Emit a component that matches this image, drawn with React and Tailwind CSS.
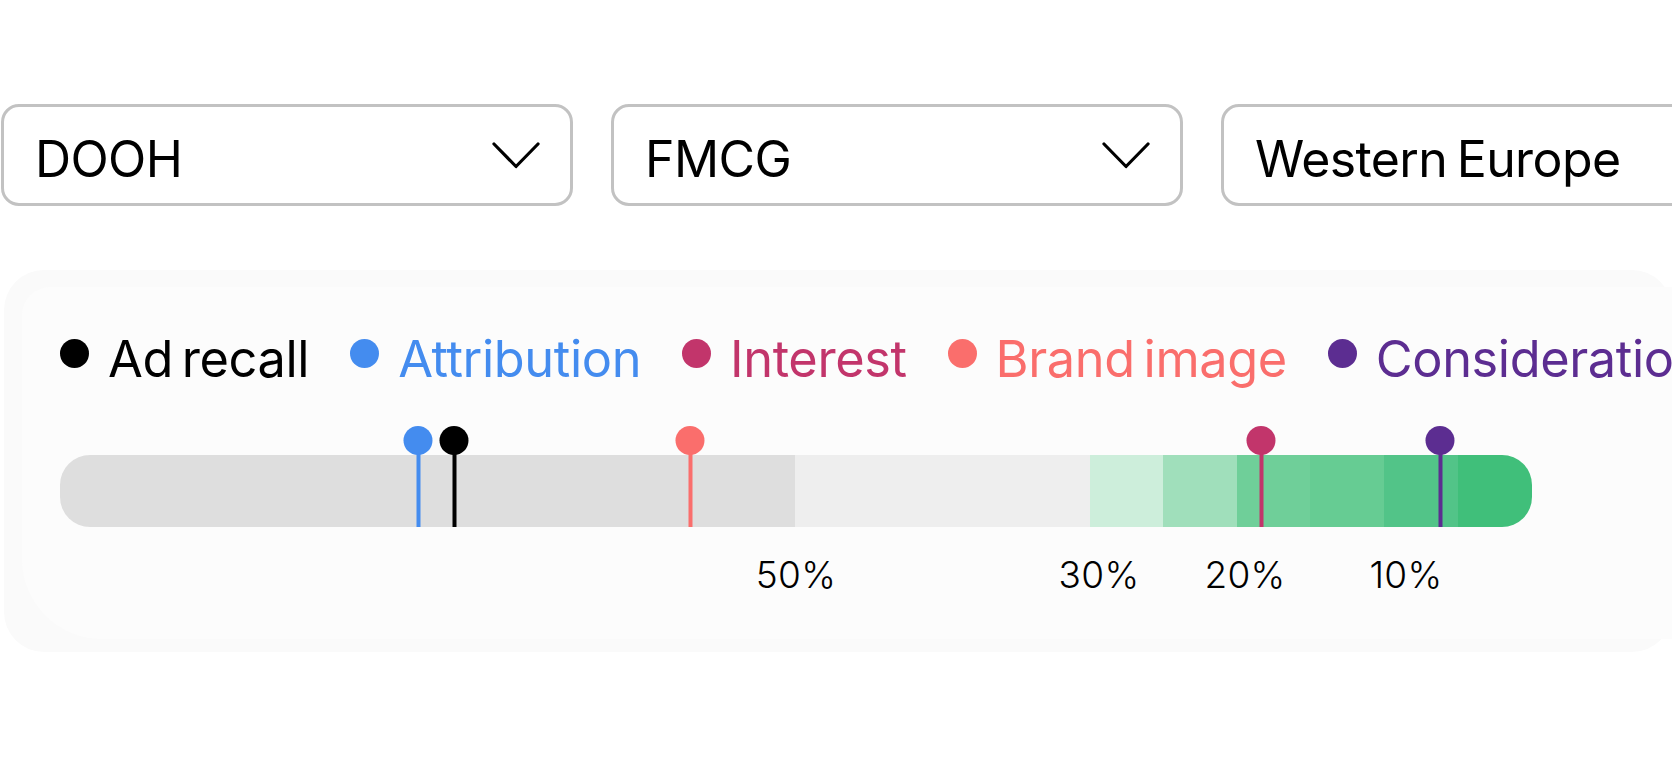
import React from 'react';

const dropdowns = [
  { label: 'DOOH', chevron: true },
  { label: 'FMCG', chevron: true },
  { label: 'Western Europe', chevron: true },
];

const legend = [
  { label: 'Ad recall', color: '#000000' },
  { label: 'Attribution', color: '#448cef' },
  { label: 'Interest', color: '#c2356b' },
  { label: 'Brand image', color: '#fa6e6c' },
  { label: 'Consideration', color: '#5c2d91' },
];

// bar segments, widths in px
const segments = [
  { w: 735, color: '#dedede' },
  { w: 295, color: '#eeeeee' },
  { w: 73, color: '#cdeedb' },
  { w: 74, color: '#a0dfbb' },
  { w: 73, color: '#6fcf99' },
  { w: 74, color: '#66cc93' },
  { w: 74, color: '#52c488' },
  { w: 74, color: '#40bf7a' },
];

const pins = [
  { x: 358, color: '#448cef' },
  { x: 394, color: '#000000' },
  { x: 630, color: '#fa6e6c' },
  { x: 1201, color: '#c2356b' },
  { x: 1380, color: '#5c2d91' },
];

const ticks = [
  { x: 736, label: '50%' },
  { x: 1039, label: '30%' },
  { x: 1185, label: '20%' },
  { x: 1346, label: '10%' },
];

function Chevron() {
  return (
    <svg width="48" height="27" viewBox="0 0 48 27" fill="none">
      <path d="M2 2L24 24.5L46 2" stroke="#000" strokeWidth="3.2" strokeLinecap="round" strokeLinejoin="round" />
    </svg>
  );
}

export default function App() {
  return (
    <div className="w-[1672px] h-[760px] overflow-hidden bg-white font-['Inter',sans-serif] text-black">
      {/* filters */}
      <div className="flex gap-[38px] pt-[104px] pl-[1px]">
        {dropdowns.map((d) => (
          <div
            key={d.label}
            className="shrink-0 w-[572px] h-[102px] border-[3px] border-[#c2c2c2] rounded-[18px] bg-white flex items-center justify-between pl-[31px] pr-[30px]"
          >
            <span className="text-[50px] leading-none tracking-[-0.6px] [word-spacing:-4px] pt-[8px]">{d.label}</span>
            {d.chevron && <Chevron />}
          </div>
        ))}
      </div>

      {/* chart card */}
      <div className="ml-[4px] mt-[64px] h-[382px] rounded-[40px] bg-[#fafafa] pt-[17px] pl-[18px]">
        <div className="h-[352px] rounded-tl-[28px] rounded-bl-[80px] bg-[#fcfcfc] pl-[38px] pt-[41px]">
          {/* legend */}
          <div className="flex items-center h-[58px] whitespace-nowrap">
            {legend.map((l, i) => (
              <div key={l.label} className={`flex items-center shrink-0 ${i > 0 ? 'ml-[41px]' : ''}`}>
                <span className="w-[29px] h-[29px] rounded-full shrink-0 -mt-[8px]" style={{ backgroundColor: l.color }} />
                <span
                  className="ml-[19px] text-[50.5px] leading-none tracking-[-0.4px] [word-spacing:-5px] pt-[5px]"
                  style={{ color: l.color }}
                >
                  {l.label}
                </span>
              </div>
            ))}
          </div>

          {/* bar with pins */}
          <div className="relative mt-[40px] w-[1472px] pt-[29px]">
            <div className="flex h-[72px] rounded-[30px] overflow-hidden">
              {segments.map((s, i) => (
                <div key={i} className="h-full shrink-0" style={{ width: s.w, backgroundColor: s.color }} />
              ))}
            </div>
            {pins.map((p, i) => (
              <div key={i} className="absolute top-0 w-[29px] h-[101px] -translate-x-1/2" style={{ left: p.x }}>
                <div className="absolute left-1/2 top-[14px] bottom-0 w-[4px] -translate-x-1/2" style={{ backgroundColor: p.color }} />
                <div className="absolute top-0 left-0 w-[29px] h-[29px] rounded-full" style={{ backgroundColor: p.color }} />
              </div>
            ))}
          </div>

          {/* scale labels */}
          <div className="relative mt-[26px] h-[44px] w-[1472px]">
            {ticks.map((t) => (
              <span
                key={t.label}
                className="absolute top-0 -translate-x-1/2 text-[37px] font-light leading-[44px] tracking-[0.3px]"
                style={{ left: t.x }}
              >
                {t.label}
              </span>
            ))}
          </div>
        </div>
      </div>
    </div>
  );
}
